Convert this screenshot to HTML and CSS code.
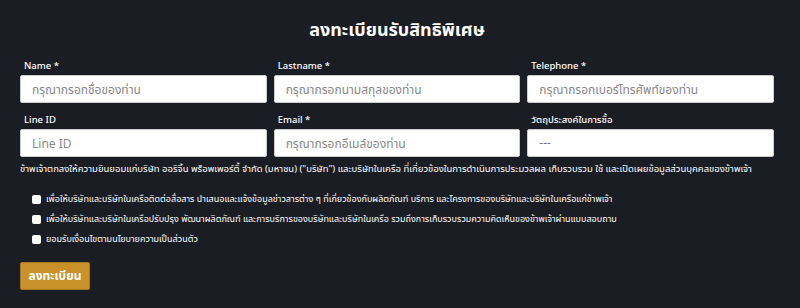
FILE: index.html
```html
<!DOCTYPE HTML>
<html>
<head>
	<meta charset="utf-8">
	<link rel="stylesheet" href="styles.css">
</head>
<body>
	<div class="wrap">
		<h2 class="title">ลงทะเบียนรับสิทธิพิเศษ</h2>

		<div class="grid">
			<div class="field">
				<label>Name *</label>
				<input type="text" class="input" placeholder="กรุณากรอกชื่อของท่าน">
			</div>
			<div class="field">
				<label>Lastname *</label>
				<input type="text" class="input" placeholder="กรุณากรอกนามสกุลของท่าน">
			</div>
			<div class="field">
				<label>Telephone *</label>
				<input type="text" class="input" placeholder="กรุณากรอกเบอร์โทรศัพท์ของท่าน">
			</div>
			<div class="field">
				<label>Line ID</label>
				<input type="text" class="input" placeholder="Line ID">
			</div>
			<div class="field">
				<label>Email *</label>
				<input type="text" class="input" placeholder="กรุณากรอกอีเมล์ของท่าน">
			</div>
			<div class="field">
				<label>วัตถุประสงค์ในการซื้อ</label>
				<div class="input select">---</div>
			</div>
		</div>

		<p class="consent">ข้าพเจ้าตกลงให้ความยินยอมแก่บริษัท ออริจิ้น พร็อพเพอร์ตี้ จำกัด (มหาชน) ("บริษัท") และบริษัทในเครือ ที่เกี่ยวข้องในการดำเนินการประมวลผล เก็บรวบรวม ใช้ และเปิดเผยข้อมูลส่วนบุคคลของข้าพเจ้า</p>

		<div class="checks">
			<label class="check"><span class="box"></span>เพื่อให้บริษัทและบริษัทในเครือติดต่อสื่อสาร นำเสนอและแจ้งข้อมูลข่าวสารต่าง ๆ ที่เกี่ยวข้องกับผลิตภัณฑ์ บริการ และโครงการของบริษัทและบริษัทในเครือแก่ข้าพเจ้า</label>
			<label class="check"><span class="box"></span>เพื่อให้บริษัทและบริษัทในเครือปรับปรุง พัฒนาผลิตภัณฑ์ และการบริการของบริษัทและบริษัทในเครือ รวมถึงการเก็บรวบรวมความคิดเห็นของข้าพเจ้าผ่านแบบสอบถาม</label>
			<label class="check"><span class="box"></span>ยอมรับเงื่อนไขตามนโยบายความเป็นส่วนตัว</label>
		</div>

		<button class="button">ลงทะเบียน</button>
	</div>
</body>
</html>
```

FILE: styles.css
```css
body {
	margin: 0;
	background: #1b1d24;
	color: #fff;
	font-family: "Noto Sans", "Noto Sans Thai", sans-serif;
}

.wrap {
	padding: 14px 26px 0 20px;
}

.title {
	margin: 0 0 16px;
	text-align: center;
	font-size: 18px;
	font-weight: 700;
	line-height: 30px;
}

.grid {
	display: grid;
	grid-template-columns: repeat(3, 1fr);
	column-gap: 7px;
	row-gap: 11px;
}

.field label {
	display: block;
	padding-left: 4px;
	font-size: 9.5px;
	font-weight: 500;
	line-height: 12px;
	margin-bottom: 3px;
}

.input {
	box-sizing: border-box;
	display: block;
	width: 100%;
	height: 28px;
	border: 1px solid #ccc;
	border-radius: 2px;
	background: #fff;
	padding: 0 11px;
	font-family: inherit;
	font-size: 12px;
	color: #333;
	outline: none;
}

.input::placeholder {
	color: #888;
}

.select {
	line-height: 26px;
	color: #777;
}

.consent {
	margin: 5px 0 16px;
	font-size: 9.5px;
	line-height: 14px;
	white-space: nowrap;
}

.checks {
	padding-left: 12px;
}

.check {
	display: flex;
	align-items: center;
	font-size: 9px;
	line-height: 14px;
	margin-bottom: 6px;
}

.box {
	width: 9px;
	height: 9px;
	background: #fff;
	border-radius: 2px;
	margin-right: 5px;
	flex: none;
}

.button {
	margin-top: 10px;
	width: 70px;
	height: 28px;
	border: 1px solid #a87a1c;
	border-radius: 2px;
	background: #c8912a;
	color: #fff;
	font-family: inherit;
	font-size: 12px;
	font-weight: 700;
}
```
